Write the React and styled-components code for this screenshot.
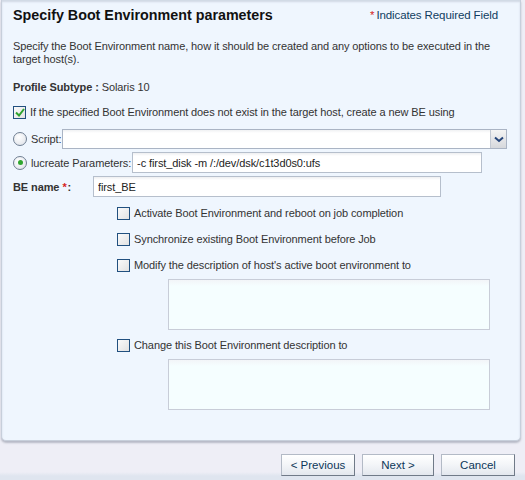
import React from 'react';
import styled, { createGlobalStyle } from 'styled-components';

const GlobalStyle = createGlobalStyle`
  html, body {
    margin: 0;
    padding: 0;
    background: #eeeef6;
  }
  body {
    font-family: "Liberation Sans", Arial, sans-serif;
    font-size: 11px;
    color: #333;
  }
`;

const Page = styled.div`
  width: 525px;
  height: 480px;
  display: flex;
  flex-direction: column;
  background: linear-gradient(#eeeef6 0, #eeeef6 472px, #dfe5ef 476px, #dfe5ef 480px);
  overflow: hidden;
`;

const Panel = styled.div`
  margin: 0 4px 0 1px;
  height: 441px;
  box-sizing: border-box;
  background: #eff6fe;
  border: 1px solid #c7cfdb;
  border-top: none;
  border-radius: 0 0 5px 5px;
  box-shadow: 0 2px 2px rgba(80, 90, 110, 0.35), inset 0 2px 2px rgba(120, 130, 150, 0.25);
  padding: 0 11px;
  letter-spacing: -0.1px;
`;

const Header = styled.div`
  height: 30px;
  display: flex;
  align-items: center;
  justify-content: space-between;
  padding-right: 11px;
`;

const Title = styled.h1`
  margin: 0;
  font-size: 14.3px;
  font-weight: bold;
  color: #111;
  letter-spacing: 0;
`;

const Required = styled.span`
  color: #0f3d61;
  font-size: 11.5px;
`;

const Star = styled.span`
  color: #d61f1f;
  font-weight: ${p => (p.$bold ? 'bold' : 'normal')};
  margin: ${p => (p.$bold ? '0 1px 0 3px' : '0 2px 0 0')};
`;

const Desc = styled.p`
  margin: 10px 0 0;
  line-height: 13px;
  font-size: 11px;
`;

const Profile = styled.div`
  margin-top: 14px;
  height: 14px;
  line-height: 14px;
  b {
    font-weight: bold;
  }
`;

const Row = styled.div`
  display: flex;
  align-items: center;
  height: ${p => p.$h || 20}px;
  margin-top: ${p => p.$mt || 0}px;
  padding-left: ${p => p.$indent || 0}px;
`;

const Label = styled.span`
  margin-left: ${p => p.$ml ?? 4}px;
  white-space: nowrap;
`;

const BoldLabel = styled.span`
  font-weight: bold;
  width: 80px;
  white-space: nowrap;
`;

const Box = styled.span`
  width: 11px;
  height: 11px;
  border: 1px solid #21507f;
  background: linear-gradient(135deg, #fafafa 0%, #e2e2e2 100%);
  display: inline-flex;
  align-items: center;
  justify-content: center;
  flex: none;
`;

const Radio = styled.span`
  width: 12px;
  height: 12px;
  border-radius: 50%;
  border: 1px solid #6f7f92;
  background: radial-gradient(circle at 40% 35%, #ffffff 0%, #e6e9ee 70%, #c9ced6 100%);
  display: inline-flex;
  align-items: center;
  justify-content: center;
  flex: none;
  &::after {
    content: '';
    display: ${p => (p.$on ? 'block' : 'none')};
    width: 5px;
    height: 5px;
    border-radius: 50%;
    background: #2fa62f;
  }
`;

const SelectBox = styled.div`
  margin-left: 1px;
  flex: 1;
  margin-right: 2px;
  height: 20px;
  box-sizing: border-box;
  border: 1px solid #aab4c4;
  background: linear-gradient(#f0f1f3 0, #fff 3px);
  display: flex;
  justify-content: flex-end;
`;

const SelectArrow = styled.span`
  width: 15px;
  height: 100%;
  border-left: 1px solid #c3c9d3;
  background: linear-gradient(#f4f4f4, #d6d8dc);
  display: flex;
  align-items: center;
  justify-content: center;
`;

const TextInput = styled.input`
  box-sizing: border-box;
  width: ${p => p.$w}px;
  height: 21px;
  margin-left: ${p => p.$ml ?? 1}px;
  border: 1px solid #b6bfcc;
  background: linear-gradient(#eeeff1 0, #fff 3px);
  font-family: "Liberation Sans", Arial, sans-serif;
  font-size: 11px;
  letter-spacing: -0.1px;
  color: #222;
  padding: 1px 4px 0;
  outline: none;
`;

const Area = styled.textarea`
  display: block;
  box-sizing: border-box;
  width: 322px;
  height: 51px;
  margin: ${p => p.$mt}px 0 0 155px;
  border: 1px solid #c8cdd8;
  background: linear-gradient(#f2f5f8 0, #f5feff 6px);
  resize: none;
  outline: none;
`;

const Footer = styled.div`
  display: flex;
  justify-content: flex-end;
  gap: 7px;
  padding: 13px 10px 0 0;
`;

const Button = styled.button`
  width: ${p => p.$w || 74}px;
  height: 22px;
  box-sizing: border-box;
  border: 1px solid #b3bac6;
  border-right-color: #707a88;
  border-bottom-color: #707a88;
  background: linear-gradient(#ffffff 0%, #f3f5f8 50%, #e3e7ee 100%);
  color: #0c3759;
  font-family: "Liberation Sans", Arial, sans-serif;
  font-size: 11.5px;
  padding: 0;
  cursor: pointer;
`;

const Check = () => (
  <svg width="10" height="9" viewBox="0 0 10 9">
    <path d="M1 4.5 L4 7.5 L9 1" fill="none" stroke="#2ea32e" strokeWidth="2" />
  </svg>
);

const Chevron = () => (
  <svg width="10" height="7" viewBox="0 0 10 7">
    <path d="M1 1.5 L5 5 L9 1.5" fill="none" stroke="#26467a" strokeWidth="2" />
  </svg>
);

export default function App() {
  return (
    <Page>
      <GlobalStyle />
      <Panel>
        <Header>
          <Title>Specify Boot Environment parameters</Title>
          <Required>
            <Star>*</Star>Indicates Required Field
          </Required>
        </Header>
        <Desc>
          Specify the Boot Environment name, how it should be created and any options to be executed in the
          target host(s).
        </Desc>
        <Profile>
          <b>Profile Subtype :</b> Solaris 10
        </Profile>
        <Row $h={16} $mt={10}>
          <Box>
            <Check />
          </Box>
          <Label>If the specified Boot Environment does not exist in the target host, create a new BE using</Label>
        </Row>
        <Row $h={20} $mt={9}>
          <Radio />
          <Label>Script:</Label>
          <SelectBox>
            <SelectArrow>
              <Chevron />
            </SelectArrow>
          </SelectBox>
        </Row>
        <Row $h={21} $mt={3}>
          <Radio $on />
          <Label>lucreate Parameters:</Label>
          <TextInput $w={350} readOnly value="-c first_disk -m /:/dev/dsk/c1t3d0s0:ufs" />
        </Row>
        <Row $h={21} $mt={3}>
          <BoldLabel>
            BE name<Star $bold>*</Star>:
          </BoldLabel>
          <TextInput $w={348} $ml={0} readOnly value="first_BE" />
        </Row>
        <Row $h={16} $mt={8} $indent={104}>
          <Box />
          <Label>Activate Boot Environment and reboot on job completion</Label>
        </Row>
        <Row $h={16} $mt={10} $indent={104}>
          <Box />
          <Label>Synchronize existing Boot Environment before Job</Label>
        </Row>
        <Row $h={16} $mt={10} $indent={104}>
          <Box />
          <Label>Modify the description of host's active boot environment to</Label>
        </Row>
        <Area $mt={6} />
        <Row $h={16} $mt={7} $indent={104}>
          <Box />
          <Label>Change this Boot Environment description to</Label>
        </Row>
        <Area $mt={6} />
      </Panel>
      <Footer>
        <Button>&lt; Previous</Button>
        <Button $w={72}>Next &gt;</Button>
        <Button>Cancel</Button>
      </Footer>
    </Page>
  );
}
